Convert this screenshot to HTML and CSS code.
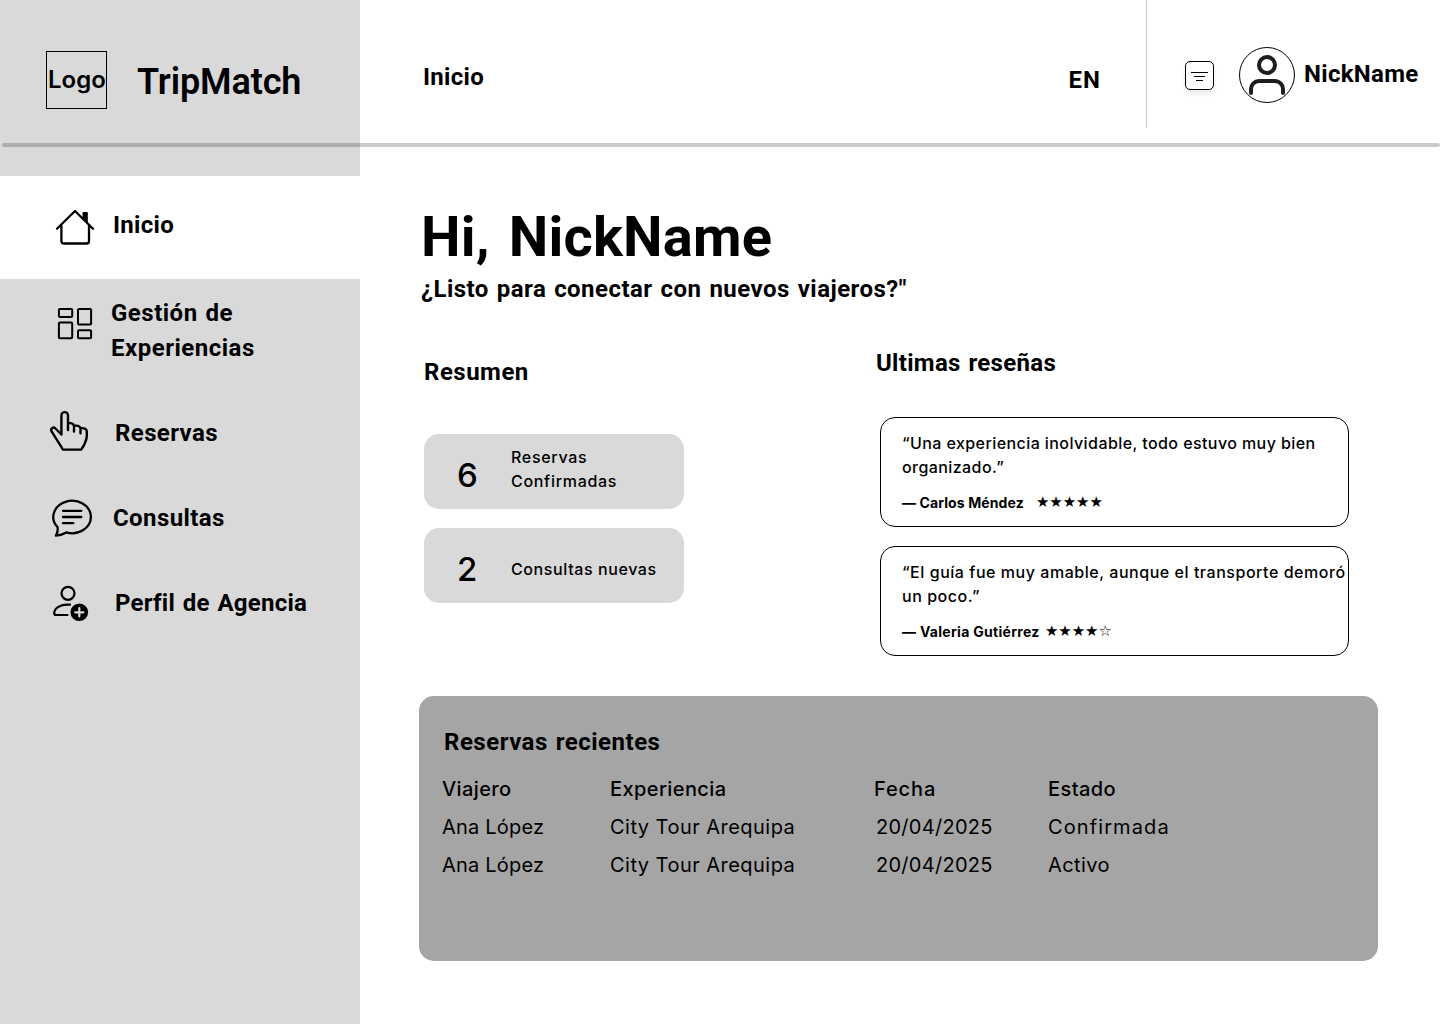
FILE: index.html
```html
<!DOCTYPE html>
<html lang="es">
<head>
<meta charset="utf-8">
<title>TripMatch</title>
<link rel="stylesheet" href="styles.css">
</head>
<body>
<div class="app">
  <aside class="sidebar">
    <div class="brand">
      <div class="logo">Logo</div>
      <div class="brand-name">TripMatch</div>
    </div>
    <nav class="nav">
      <a class="nav-item active">
        <svg class="nav-icon" viewBox="48 200 48 47" fill="none" stroke="#000" stroke-width="2.3" stroke-linecap="round" stroke-linejoin="round">
          <path d="M57 228.700 75 211l18 17.700M61.400 225.700v15.600a2.200 2.200 0 0 0 2.200 2.200h23.200a2.200 2.200 0 0 0 2.200-2.200v-15.600"/>
          <path d="M83.300 212.600h3.800v9.200l-3.800-3.600z" fill="#000" stroke-width="1.400"/>
        </svg>
        <span class="heading nav-text">Inicio</span>
      </a>
      <a class="nav-item tall">
        <svg class="nav-icon" viewBox="48 294 48 47" fill="none" stroke="#000" stroke-width="2">
          <rect x="58.900" y="309" width="13.300" height="8" rx="1"/>
          <rect x="78" y="309" width="13.100" height="15.500" rx="1"/>
          <rect x="58.900" y="322.400" width="13.300" height="15.900" rx="1"/>
          <rect x="78" y="330.200" width="13.100" height="8.100" rx="1"/>
        </svg>
        <span class="heading nav-text">Gestión de<br>Experiencias</span>
      </a>
      <a class="nav-item">
        <svg class="nav-icon" viewBox="48 408 48 47" fill="none" stroke="#000" stroke-width="2.400" stroke-linecap="round" stroke-linejoin="round">
          <path d="M61.400 434.500V415.400a3.300 3.300 0 0 1 6.600 0V430M68 423.300c2.600-.5 5.600-.2 6 2.400v5.800M74 425.800c2.600-.5 6-.2 6.500 2.500v5M80.500 428.300c3-.5 6.300.2 6.300 3.200v4.500c0 4.200-2.200 7.200-3 9.500l-2.700 4.100H63L51.900 431.800c-2-3.200 1.300-5.600 3.600-3.300l5.900 6"/>
        </svg>
        <span class="heading nav-text shifted">Reservas</span>
      </a>
      <a class="nav-item">
        <svg class="nav-icon" viewBox="48 493 48 47" fill="none" stroke="#000" stroke-width="2.300" stroke-linecap="round" stroke-linejoin="round">
          <path d="M57.600 527.300A18.800 16.200 0 1 1 66.300 532.400Q62 535 55.800 535.600 58.200 532 57.600 527.300zM63 510.800h18.300M63 517h18.300M63 523.200h10.300"/>
        </svg>
        <span class="heading nav-text">Consultas</span>
      </a>
      <a class="nav-item">
        <svg class="nav-icon" viewBox="48 578 48 47" fill="none" stroke="#000" stroke-width="2.200" stroke-linecap="round">
          <circle cx="68" cy="593.300" r="6.500"/>
          <path d="M70 604.700C60 603.900 54.200 608.500 54.200 613.300q0 1.700 1.700 1.700H67.500"/>
          <circle cx="79.300" cy="612.300" r="8.800" fill="#000" stroke="none"/>
          <path d="M79.300 608.200v8.200M75.200 612.300h8.200" stroke="#d9d9d9" stroke-width="2.200"/>
        </svg>
        <span class="heading nav-text shifted profile">Perfil de Agencia</span>
      </a>
    </nav>
  </aside>

  <div class="page">
    <header class="topbar">
      <div class="heading page-name">Inicio</div>
      <div class="heading lang">EN</div>
      <div class="account">
        <svg class="filter" viewBox="0 0 27 27" fill="none" stroke="#000">
          <path d="M5 10.500h17M8 14.500h11M10 18.500h7"/>
        </svg>
        <svg class="avatar" viewBox="0 0 56 56" fill="none" stroke="#1e1e1e" stroke-width="4" stroke-linecap="round">
          <circle cx="28" cy="28" r="27.500" stroke="#000" stroke-width="1"/>
          <circle cx="28" cy="18" r="8"/>
          <path d="M12 46v-4a8 8 0 0 1 8-8h16a8 8 0 0 1 8 8v4"/>
        </svg>
        <div class="heading nick">NickName</div>
      </div>
    </header>

    <main class="content">
      <h1 class="hello">Hi, NickName</h1>
      <p class="heading tagline">¿Listo para conectar con nuevos viajeros?"</p>

      <div class="columns">
        <section class="summary">
          <h2 class="heading">Resumen</h2>
          <div class="stat">
            <span class="stat-number">6</span>
            <span class="stat-label">Reservas<br>Confirmadas</span>
          </div>
          <div class="stat">
            <span class="stat-number">2</span>
            <span class="stat-label single">Consultas nuevas</span>
          </div>
        </section>
        <section class="reviews">
          <h2 class="heading reviews-title">Ultimas reseñas</h2>
          <article class="review">
            <p class="quote">“Una experiencia inolvidable, todo estuvo muy bien<br>organizado.”</p>
            <p class="author"><span class="author-name">— Carlos Méndez</span><span class="stars">★★★★★</span></p>
          </article>
          <article class="review second">
            <p class="quote">“El guía fue muy amable, aunque el transporte demoró<br>un poco.”</p>
            <p class="author"><span class="author-name">— Valeria Gutiérrez</span><span class="stars">★★★★☆</span></p>
          </article>
        </section>
      </div>

      <section class="bookings">
        <h2 class="heading bookings-title">Reservas recientes</h2>
        <div class="table">
          <span class="th">Viajero</span><span class="th">Experiencia</span><span class="th fecha">Fecha</span><span class="th">Estado</span>
          <span>Ana López</span><span class="tour">City Tour Arequipa</span><span class="date">20/04/2025</span><span class="status">Confirmada</span>
          <span>Ana López</span><span class="tour">City Tour Arequipa</span><span class="date">20/04/2025</span><span class="active-status">Activo</span>
        </div>
      </section>
    </main>
  </div>
  <div class="rule"></div>
</div>
</body>
</html>
```

FILE: styles.css
```css
* { box-sizing: border-box; }

body {
  margin: 0;
  background: #fff;
  color: #000;
  font-family: Inter, "Liberation Sans", sans-serif;
}

h1, h2, p { margin: 0; }

.app {
  position: relative;
  display: grid;
  grid-template-columns: 360px 1fr;
  width: 1440px;
  height: 1024px;
  overflow: hidden;
}

/* the line runs across the sidebar and the header */
.rule {
  position: absolute;
  left: 2px;
  top: 143px;
  width: 1438px;
  height: 4px;
  border-radius: 2px;
  background: rgba(0, 0, 0, 0.2);
}

.heading {
  padding-top: 2px;
  font: 700 24px/33px Roboto, sans-serif;
  letter-spacing: 0.5px;
  word-spacing: 1.5px;
  white-space: nowrap;
}

/* sidebar */
.sidebar { background: #d9d9d9; }

.brand {
  display: flex;
  height: 176px;
  padding: 51px 0 0 46px;
}

.logo {
  width: 61px;
  height: 58px;
  border: 1px solid #000;
  padding-left: 1px;
  font-size: 24px;
  font-weight: 600;
  line-height: 56px;
}

.brand-name {
  margin: 10px 0 0 30px;
  font: 600 36px/42px Roboto, sans-serif;
  letter-spacing: -0.1px;
}

.nav {
  display: flex;
  flex-direction: column;
}

.nav-item {
  display: flex;
  align-items: flex-start;
  height: 85px;
  padding-left: 48px;
}

.nav-item.active {
  height: 103px;
  margin-bottom: 15px;
  padding-top: 24px;
  background: #fff;
}

.nav-item.tall { height: 114px; }

.nav-icon {
  flex: none;
  width: 48px;
  height: 47px;
}

.nav-text {
  margin: 1px 0 0 16px;
  padding-top: 1px;
  line-height: 35px;
}

.active .nav-text { margin: 7px 0 0 17px; letter-spacing: 0.3px; }
.tall .nav-text { margin: 1px 0 0 15px; }
.nav-item:nth-child(n + 3) .nav-text { margin-top: 7px; }
.nav-item:nth-child(4) .nav-text { margin-left: 17px; letter-spacing: 0.4px; }
.nav-item .shifted { margin-left: 19px; letter-spacing: 0.4px; }
.nav-item .profile { letter-spacing: 0.25px; }

/* header */
.topbar {
  display: flex;
  align-items: flex-start;
  height: 143px;
  padding-left: 62px;
}

.page-name {
  margin: 59px 0 0 1px;
  letter-spacing: 0.3px;
}

.lang {
  margin: 62px 45px 0 auto;
  letter-spacing: 1px;
}

.account {
  display: flex;
  width: 294px;
  height: 128px;
  border-left: 1px solid #c8c8c8;
  padding-left: 38px;
}

.filter {
  flex: none;
  width: 29px;
  height: 29px;
  margin: 61px 25px 0 0;
  border: 1px solid #000;
  border-radius: 5px;
  box-shadow: 0 4px 4px rgba(0, 0, 0, 0.08);
}

.avatar {
  flex: none;
  width: 56px;
  height: 56px;
  margin: 47px 9px 0 0;
}

.nick {
  margin-top: 56px;
  letter-spacing: 0.3px;
}

/* content */
.content { padding: 62px 62px 0 59px; }

.hello {
  margin: -1px 0 1px 2px;
  font: 700 56px/66px Roboto, sans-serif;
  letter-spacing: 0.2px;
  word-spacing: 5px;
}

.tagline {
  margin-left: 2px;
  letter-spacing: 0.47px;
}

.columns {
  display: grid;
  grid-template-columns: 456px 469px;
  margin: 39px 0 40px 5px;
}

.summary { padding-top: 9px; }
.summary .heading { margin-bottom: 45px; }

.stat {
  display: flex;
  width: 260px;
  height: 75px;
  margin-bottom: 19px;
  border-radius: 15px;
  background: #d9d9d9;
}

.stat-number {
  width: 87px;
  margin-top: 21px;
  padding-left: 33px;
  font-size: 33px;
  font-weight: 500;
  line-height: 40px;
}

.stat-label {
  margin-top: 11px;
  font-size: 16px;
  font-weight: 500;
  line-height: 24px;
  letter-spacing: 0.7px;
}

.stat-label.single {
  margin-top: 29px;
  letter-spacing: 0.6px;
}

.reviews-title {
  margin: 0 0 37px -4px;
  letter-spacing: 0.3px;
}

.review {
  height: 110px;
  border: 1px solid #000;
  border-radius: 15px;
  padding: 13px 0 0 21px;
}

.review.second { margin-top: 19px; }

.quote {
  font-size: 16px;
  font-weight: 500;
  line-height: 24px;
  letter-spacing: 0.42px;
  white-space: nowrap;
}

.second .quote { letter-spacing: 0.54px; }

.author {
  display: flex;
  margin-top: 13px;
  font-size: 14px;
  font-weight: 700;
  line-height: 21px;
}

.author-name {
  width: 134px;
  letter-spacing: 0.1px;
}

.second .author-name {
  width: 143px;
  letter-spacing: 0.3px;
}

.stars {
  font-family: "DejaVu Sans", sans-serif;
  font-size: 15px;
  font-weight: 400;
  letter-spacing: -0.1px;
}

.bookings {
  height: 265px;
  border-radius: 15px;
  padding: 28px 0 0 23px;
  background: #a5a5a5;
}

.bookings-title { margin-left: 2px; }

.table {
  display: grid;
  grid-template-columns: 168px 264px 174px auto;
  grid-auto-rows: 38px;
  margin-top: 11px;
  font-size: 20px;
  line-height: 38px;
  letter-spacing: 0.2px;
}

.th {
  font-weight: 500;
  letter-spacing: 0.4px;
}

.fecha { letter-spacing: 0.9px; }
.tour { letter-spacing: 0.47px; }

.date {
  padding-left: 2px;
  letter-spacing: 0.28px;
}

.status { letter-spacing: 1.1px; }
.active-status { letter-spacing: 0.4px; }
```
